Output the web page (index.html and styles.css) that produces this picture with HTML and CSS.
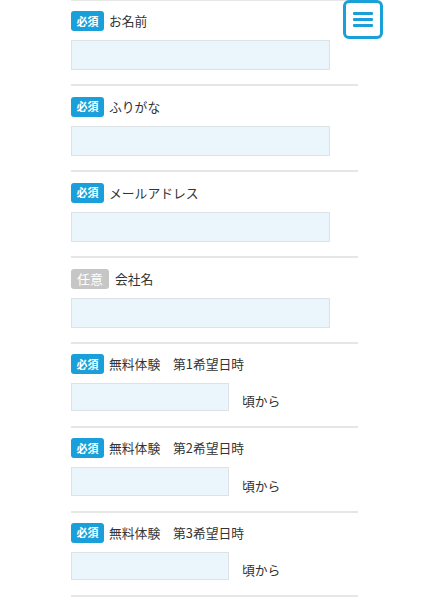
FILE: index.html
```html
<!DOCTYPE html>
<html lang="ja">
<head>
<meta charset="utf-8">
<link rel="stylesheet" href="styles.css">
</head>
<body>
<div class="form">
  <div class="field">
    <div class="head"><span class="badge req">必須</span><span class="label">お名前</span></div>
    <div class="input"></div>
  </div>
  <div class="field">
    <div class="head"><span class="badge req">必須</span><span class="label">ふりがな</span></div>
    <div class="input"></div>
  </div>
  <div class="field">
    <div class="head"><span class="badge req">必須</span><span class="label">メールアドレス</span></div>
    <div class="input"></div>
  </div>
  <div class="field">
    <div class="head"><span class="badge opt">任意</span><span class="label">会社名</span></div>
    <div class="input"></div>
  </div>
  <div class="field date">
    <div class="head"><span class="badge req">必須</span><span class="label">無料体験　第1希望日時</span></div>
    <div class="daterow"><div class="input small"></div><span class="suffix">頃から</span></div>
  </div>
  <div class="field date">
    <div class="head"><span class="badge req">必須</span><span class="label">無料体験　第2希望日時</span></div>
    <div class="daterow"><div class="input small"></div><span class="suffix">頃から</span></div>
  </div>
  <div class="field date">
    <div class="head"><span class="badge req">必須</span><span class="label">無料体験　第3希望日時</span></div>
    <div class="daterow"><div class="input small"></div><span class="suffix">頃から</span></div>
  </div>
</div>
<button class="menu" aria-label="menu"><span></span><span></span><span></span></button>
</body>
</html>
```
FILE: styles.css
```css
html, body {
  margin: 0;
  padding: 0;
  background: #ffffff;
}
body {
  font-family: "Noto Sans CJK JP", "Noto Sans", sans-serif;
  color: #333333;
  position: relative;
  height: 600px;
  overflow: hidden;
}
.form {
  margin: -1.5px 0 0 71px;
  width: 287px;
  border-top: 2px solid #e6e6e6;
}
.field {
  padding: 10.5px 0 14.4px;
  border-bottom: 2px solid #e6e6e6;
}
.field.date {
  padding: 10px 0 14.9px;
}
.head {
  display: flex;
  align-items: center;
  height: 20px;
  margin-bottom: 9px;
}
.badge {
  display: inline-flex;
  align-items: center;
  justify-content: center;
  height: 20px;
  border-radius: 3px;
  color: #ffffff;
  line-height: 1;
}
.badge.req {
  background: #199fd9;
  font-size: 11px;
  font-weight: bold;
  padding: 0 5.5px;
}
.badge.opt {
  background: #c6c6c6;
  font-size: 13px;
  padding: 0 6px;
}
.label {
  font-size: 12.8px;
  margin-left: 5px;
  line-height: 20px;
}
.badge.opt + .label {
  margin-left: 6px;
}
.input {
  box-sizing: border-box;
  width: 259px;
  height: 30px;
  background: #ebf6fc;
  border: 1px solid #dbe3e7;
}
.daterow {
  display: flex;
  align-items: flex-end;
  margin-top: 1.3px;
}
.input.small {
  width: 158px;
  height: 28.4px;
}
.suffix {
  font-size: 12.8px;
  line-height: 20px;
  margin-left: 13px;
}
.menu {
  position: absolute;
  top: 0;
  left: 343px;
  width: 40px;
  height: 39px;
  box-sizing: border-box;
  border: 3px solid #1aa0d9;
  border-radius: 6px;
  background: #ffffff;
  padding: 0;
  display: flex;
  flex-direction: column;
  align-items: center;
  justify-content: center;
  gap: 3px;
}
.menu span {
  display: block;
  width: 20px;
  height: 3px;
  border-radius: 1px;
  background: #1aa0d9;
}
```
